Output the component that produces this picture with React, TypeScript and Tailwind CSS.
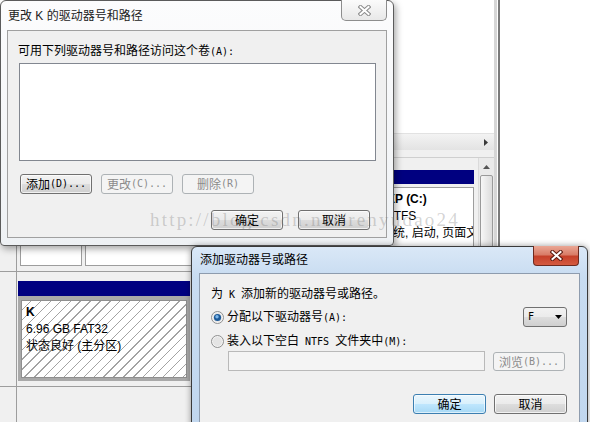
import React from "react";

const titleFont = "[font-family:'Liberation_Sans','Noto_Sans_CJK_SC',sans-serif]";
const bodyFont = "[font-family:'Noto_Sans_CJK_SC',sans-serif]";

// SimSun-like text: CJK in Noto, half-width ASCII runs in a 6px mono
function Sim({ text }: { text: string }) {
  const runs = text.match(/[\x20-\x7e]+|[^\x20-\x7e]+/g) ?? [];
  return (
    <>
      {runs.map((r, i) =>
        /^[\x20-\x7e]/.test(r) ? (
          <span key={i} className="whitespace-pre [font-family:'DejaVu_Sans_Mono',monospace] text-[10px]">
            {r}
          </span>
        ) : (
          <span key={i}>{r}</span>
        )
      )}
    </>
  );
}

function Button({
  label,
  variant = "normal",
  className = "",
}: {
  label: string;
  variant?: "normal" | "disabled" | "default";
  className?: string;
}) {
  const look =
    variant === "disabled"
      ? "border-[#adb2b5] bg-[#f4f4f4] text-[#8b8b8b]"
      : variant === "default"
      ? "border-[#3c7fb1] bg-[linear-gradient(180deg,#eaf6fd_0%,#d9f0fc_48%,#bee6fd_52%,#a7d9f5_100%)] shadow-[inset_0_0_0_1px_rgba(255,255,255,0.6)] text-black"
      : "border-[#707070] bg-[linear-gradient(180deg,#f2f2f2_0%,#ebebeb_48%,#dddddd_52%,#cfcfcf_100%)] shadow-[inset_0_0_0_1px_rgba(255,255,255,0.7)] text-black";
  return (
    <div className={`flex items-center justify-center rounded-[3px] border text-[12px] leading-none ${look} ${className}`}>
      <Sim text={label} />
    </div>
  );
}

function CloseX({ outline, fill }: { outline: string; fill: string }) {
  return (
    <svg width="13" height="11" viewBox="0 0 13 11">
      <path d="M2.5 2L10.5 9M10.5 2L2.5 9" stroke={outline} strokeWidth="4" strokeLinecap="square" />
      <path d="M2.5 2L10.5 9M10.5 2L2.5 9" stroke={fill} strokeWidth="2" strokeLinecap="square" />
    </svg>
  );
}

function Radio({ on }: { on?: boolean }) {
  return (
    <svg width="13" height="13" viewBox="0 0 13 13" className="shrink-0">
      <circle cx="6.5" cy="6.5" r="6" fill="#f3f3f3" stroke="#8e8f8f" />
      <circle cx="6.5" cy="6.5" r="4.5" fill="#e4e4e4" />
      {on && (
        <>
          <circle cx="6.5" cy="6.5" r="3.6" fill="#1d5a98" />
          <circle cx="6" cy="5.8" r="1.7" fill="#7cb7ea" />
        </>
      )}
    </svg>
  );
}

function Partition({ w, children }: { w: string; children?: React.ReactNode }) {
  return (
    <div className={`flex flex-col ${w}`}>
      <div className="h-[14px] bg-[#000080]" />
      <div className="mt-[3px] h-[79px] overflow-hidden whitespace-nowrap border border-[#9d9d9d] bg-white pl-[1px] pt-[3px] text-[12px] leading-[17px] text-black">
        {children}
      </div>
    </div>
  );
}

export default function App() {
  return (
    <div className={`relative h-[422px] w-[590px] overflow-hidden bg-white ${titleFont}`}>
      {/* Disk management window behind the dialogs */}
      <div className="absolute left-0 top-0 flex h-full">
        <div className="flex w-[494px] flex-col">
          <div className="h-[133px] bg-white" />
          <div className="flex h-[17px] items-center justify-end border-t border-[#e2e2e2] bg-[linear-gradient(180deg,#f3f3f3,#e3e3e3)] pr-[6px]">
            <svg width="4" height="7" viewBox="0 0 4 7">
              <path d="M0 0L4 3.5L0 7z" fill="#3a3a3a" />
            </svg>
          </div>
          <div className="h-[8px] border-b border-[#cfcfcf] bg-[#f0f0f0]" />
          <div className="flex flex-1 bg-[#f0f0f0]">
            <div className="flex w-[478px] flex-col">
              <div className="h-[8px]" />
              {/* disk 0 */}
              <div className="flex h-[106px] border-b border-[#9d9d9d]">
                <div className="w-[17px] border-r border-[#9d9d9d]" />
                <div className="flex gap-[3px] pl-[3px] pt-[4px]">
                  <Partition w="w-[62px]" />
                  <Partition w="w-[295px]" />
                  <Partition w="w-[91px]">
                    <div className="pl-[2px] font-bold">XP (C:)</div>
                    <div>NTFS</div>
                    <div className="-ml-[4px]">系统, 启动, 页面文件, 故障转储</div>
                  </Partition>
                </div>
              </div>
              {/* disk 1 */}
              <div className="flex h-[115px] border-b border-[#9d9d9d]">
                <div className="w-[17px] border-r border-[#9d9d9d]" />
                <div className="flex pl-[1px] pt-[9px]">
                  <div className="flex w-[172px] flex-col">
                    <div className="h-[15px] bg-[#000080]" />
                    <div className="h-[85px] bg-[#a9a9a9] px-[3px] pb-[3px] pt-[4px]">
                      <div className="h-full border border-[#8f8f8f] bg-[repeating-linear-gradient(135deg,#ffffff_0px,#ffffff_6px,#a3a3a3_6px,#a3a3a3_7px)] pl-[4px] pt-[3px] text-[12px] leading-[17px] text-black">
                        <div className="font-bold">K</div>
                        <div>6.96 GB FAT32</div>
                        <div>状态良好 (主分区)</div>
                      </div>
                    </div>
                  </div>
                </div>
              </div>
              <div className="flex flex-1">
                <div className="w-[17px] border-r border-[#9d9d9d]" />
              </div>
            </div>
            <div className="flex w-[16px] flex-col border-l border-[#dadada] bg-[#eaeaea]">
              <div className="flex h-[17px] items-center justify-center">
                <svg width="7" height="4" viewBox="0 0 7 4">
                  <path d="M0 4L3.5 0L7 4z" fill="#555" />
                </svg>
              </div>
              <div className="mx-[1px] h-[160px] rounded-[2px] border border-[#9a9a9a] bg-[linear-gradient(90deg,#f7f7f7,#dcdcdc)]" />
            </div>
          </div>
        </div>
        <div className="w-[3px] bg-[#d6d6d6]" />
        <div className="w-[1px] bg-white" />
        <div className="w-[2px] bg-[#7a7a7a]" />
      </div>

      {/* Dialog: 更改 K 的驱动器号和路径 (inactive) */}
      <div className="absolute left-0 top-0 z-10 flex h-[246px] w-[394px] flex-col rounded-t-[6px] rounded-b-[4px] border border-[#5b5b5b] bg-[linear-gradient(180deg,#fcfcfd,#eef1f4)] shadow-[2px_3px_7px_rgba(0,0,0,0.35)]">
        <div className="flex h-[29px] items-center pl-[7px] text-[12px] text-[#222]">更改 K 的驱动器号和路径</div>
        <div className="absolute right-[6px] top-[-1px] flex h-[21px] w-[46px] items-center justify-center rounded-b-[5px] border border-t-0 border-[#8d8d8d] bg-[linear-gradient(180deg,#fbfbfb,#e8e8e8)]">
          <CloseX outline="#8a8a8a" fill="#ffffff" />
        </div>
        <div className={`mx-[6px] flex h-[208px] flex-col border border-[#a0a0a0] bg-[#f0f0f0] text-[12px] text-black ${bodyFont}`}>
          <div className="ml-[10px] mt-[11px] leading-[16px]">
            <Sim text="可用下列驱动器号和路径访问这个卷(A):" />
          </div>
          <div className="ml-[11px] mt-[3px] h-[98px] w-[357px] border border-[#828790] bg-white" />
          <div className="ml-[12px] mt-[13px] flex gap-[9px]">
            <Button label="添加(D)..." className="h-[20px] w-[72px]" />
            <Button label="更改(C)..." variant="disabled" className="h-[20px] w-[72px]" />
            <Button label="删除(R)" variant="disabled" className="h-[20px] w-[72px]" />
          </div>
          <div className="mr-[16px] mt-[16px] flex justify-end gap-[15px]">
            <Button label="确定" className="h-[20px] w-[72px]" />
            <Button label="取消" className="h-[20px] w-[72px]" />
          </div>
        </div>
      </div>

      {/* Dialog: 添加驱动器号或路径 (active) */}
      <div className="absolute left-[191px] top-[246px] z-20 flex h-[200px] w-[397px] flex-col rounded-t-[6px] border border-[#3a3a3a] bg-[linear-gradient(180deg,#dae8f7_0%,#c8dcf1_30px,#c0d6ee_100%)] shadow-[0_0_6px_rgba(0,0,0,0.4)]">
        <div className="flex h-[26px] items-center pl-[8px] text-[12px] text-black">添加驱动器号或路径</div>
        <div className="absolute right-[8px] top-[-1px] flex h-[20px] w-[46px] items-center justify-center rounded-b-[4px] border border-t-0 border-[#6d2a1f] bg-[linear-gradient(180deg,#eaa795_0%,#d97d68_45%,#c6412a_55%,#d45a40_100%)]">
          <CloseX outline="#5a1a10" fill="#ffffff" />
        </div>
        <div className={`mx-[7px] flex flex-1 flex-col border border-[#8e9cae] bg-[#f0f0f0] text-[12px] text-black ${bodyFont}`}>
          <div className="ml-[11px] mt-[11px] leading-[16px]">
            <Sim text="为 K 添加新的驱动器号或路径。" />
          </div>
          <div className="ml-[11px] mr-[12px] mt-[4px] flex h-[20px] items-center justify-between">
            <div className="flex items-center gap-[3px] leading-[16px]">
              <Radio on />
              <span>
                <Sim text="分配以下驱动器号(A):" />
              </span>
            </div>
            <div className="flex h-[20px] w-[44px] items-center justify-between rounded-[3px] border border-[#707070] bg-[linear-gradient(180deg,#f2f2f2_0%,#ebebeb_48%,#dddddd_52%,#cfcfcf_100%)] pl-[4px] pr-[4px]">
              <span className="[font-family:'DejaVu_Sans_Mono',monospace] text-[10px] leading-none">F</span>
              <svg width="7" height="4" viewBox="0 0 7 4">
                <path d="M0 0H7L3.5 4z" fill="#000" />
              </svg>
            </div>
          </div>
          <div className="ml-[11px] mt-[5px] flex items-center gap-[3px] leading-[16px]">
            <Radio />
            <span>
              <Sim text="装入以下空白 NTFS 文件夹中(M):" />
            </span>
          </div>
          <div className="ml-[28px] mt-[1px] flex items-start gap-[8px]">
            <div className="h-[20px] w-[257px] border border-[#b9b9b9] bg-[#f4f4f4]" />
            <Button label="浏览(B)..." variant="disabled" className="mt-[1px] h-[19px] w-[72px]" />
          </div>
          <div className="mr-[12px] mt-[23px] flex justify-end gap-[8px]">
            <Button label="确定" variant="default" className="h-[20px] w-[73px]" />
            <Button label="取消" className="h-[20px] w-[73px]" />
          </div>
        </div>
      </div>

      {/* blog watermark */}
      <div className="pointer-events-none absolute left-[150px] top-[208px] z-30 whitespace-nowrap [font-family:'Liberation_Serif',serif] text-[19px] leading-[24px] tracking-[2.2px] text-[rgba(110,110,110,0.3)]">
        http://blog.csdn.net/renyudao24
      </div>
    </div>
  );
}
